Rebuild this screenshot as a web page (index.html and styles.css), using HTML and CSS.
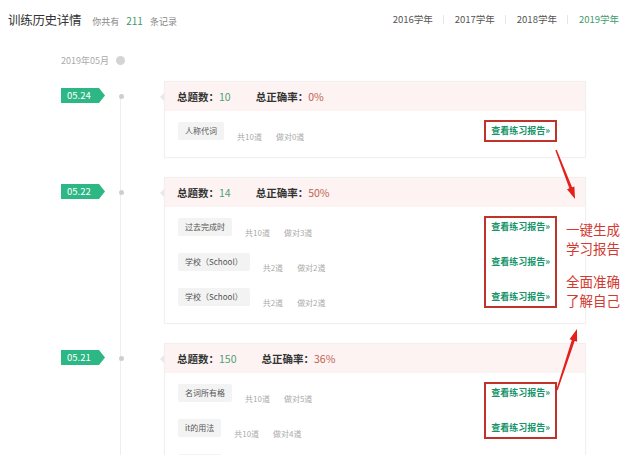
FILE: index.html
```html
<!DOCTYPE html>
<html lang="zh-CN">
<head>
<meta charset="utf-8">
<title>训练历史详情</title>
<link rel="stylesheet" href="styles.css">
</head>
<body>
<div class="page">
  <header class="top">
    <div class="title-group">
      <h1 class="title">训练历史详情</h1>
      <span class="meta">你共有<b class="total">211</b>条记录</span>
    </div>
    <nav class="years">
      <a class="year">2016学年</a>
      <a class="year">2017学年</a>
      <a class="year">2018学年</a>
      <a class="year active">2019学年</a>
    </nav>
  </header>

  <section class="timeline">
    <div class="month">
      <span class="month-label">2019年05月</span>
      <span class="month-dot"></span>
    </div>

    <div class="entry">
      <div class="date"><span class="badge">05.24</span></div>
      <div class="node"><span class="dot"></span></div>
      <div class="card">
        <div class="card-head">
          <span class="stat">总题数：<em class="num">10</em></span>
          <span class="stat">总正确率：<em class="rate">0%</em></span>
        </div>
        <div class="card-body">
          <div class="rows">
            <div class="row"><span class="tag">人称代词</span><span class="count">共10道</span><span class="count">做对0道</span></div>
          </div>
          <div class="links">
            <a class="link">查看练习报告»</a>
          </div>
        </div>
      </div>
    </div>

    <div class="entry">
      <div class="date"><span class="badge">05.22</span></div>
      <div class="node"><span class="dot"></span></div>
      <div class="card">
        <div class="card-head">
          <span class="stat">总题数：<em class="num">14</em></span>
          <span class="stat">总正确率：<em class="rate">50%</em></span>
        </div>
        <div class="card-body">
          <div class="rows">
            <div class="row"><span class="tag">过去完成时</span><span class="count">共10道</span><span class="count">做对3道</span></div>
            <div class="row"><span class="tag">学校（School）</span><span class="count">共2道</span><span class="count">做对2道</span></div>
            <div class="row"><span class="tag">学校（School）</span><span class="count">共2道</span><span class="count">做对2道</span></div>
          </div>
          <div class="links">
            <a class="link">查看练习报告»</a>
            <a class="link">查看练习报告»</a>
            <a class="link">查看练习报告»</a>
          </div>
        </div>
      </div>
    </div>

    <div class="entry">
      <div class="date"><span class="badge">05.21</span></div>
      <div class="node"><span class="dot"></span></div>
      <div class="card">
        <div class="card-head">
          <span class="stat">总题数：<em class="num">150</em></span>
          <span class="stat">总正确率：<em class="rate">36%</em></span>
        </div>
        <div class="card-body">
          <div class="rows">
            <div class="row"><span class="tag">名词所有格</span><span class="count">共10道</span><span class="count">做对5道</span></div>
            <div class="row"><span class="tag">it的用法</span><span class="count">共10道</span><span class="count">做对4道</span></div>
            <div class="row"><span class="tag tag-empty"></span></div>
          </div>
          <div class="links">
            <a class="link">查看练习报告»</a>
            <a class="link">查看练习报告»</a>
          </div>
        </div>
      </div>
    </div>
  </section>

  <div class="note">
    <p class="note-line">一键生成</p>
    <p class="note-line">学习报告</p>
    <p class="note-line note-gap">全面准确</p>
    <p class="note-line">了解自己</p>
  </div>

  <svg class="arrows" width="640" height="455" viewBox="0 0 640 455" aria-hidden="true">
    <polygon fill="#e3211c" points="556.7,149.7 572.1,187.3 574.4,186.4 575,199 567.0,189.2 569.3,188.3 555.3,150.3"/>
    <polygon fill="#e3211c" points="557.7,390.2 574.7,340.9 577.1,341.7 577,329 569.5,339.2 571.8,339.9 556.3,389.8"/>
  </svg>
</div>
</body>
</html>
```

FILE: styles.css
```css
* { box-sizing: border-box; }

html, body {
  margin: 0;
  padding: 0;
  background: #fff;
}

body {
  font-family: "Noto Sans CJK SC", "Noto Sans", "Liberation Sans", sans-serif;
  color: #333;
}

.page {
  position: relative;
  width: 640px;
  height: 455px;
  overflow: hidden;
}

/* header */
.top {
  height: 42px;
  display: flex;
  align-items: center;
  justify-content: space-between;
  padding: 0 21px 4px 8px;
}

.title-group {
  display: flex;
  align-items: baseline;
  gap: 11px;
}

.title {
  margin: 0;
  font-size: 12.5px;
  font-weight: normal;
  color: #333;
  letter-spacing: -0.3px;
}

.meta {
  font-size: 9px;
  color: #888;
}

.total {
  font-weight: normal;
  color: #3a9a6a;
  font-size: 10px;
  margin: 0 7px;
}

.years {
  display: flex;
  align-items: center;
}

.year {
  font-size: 9.5px;
  line-height: 9px;
  color: #555;
  padding: 0 10.5px;
}

.year + .year {
  border-left: 1px solid #e6e6e6;
}

.year:last-child { padding-right: 0; }

.year.active { color: #3f9a6e; }

/* timeline */
.timeline {
  padding-top: 10px;
  background: linear-gradient(#eeeeee, #eeeeee) no-repeat 120px 52px / 1px 100%;
}

.month {
  height: 16px;
  display: flex;
  align-items: center;
  padding-left: 61px;
  gap: 6px;
}

.month-label {
  font-size: 9px;
  color: #aaa;
  width: 49px;
}

.month-dot {
  width: 9px;
  height: 9px;
  border-radius: 50%;
  background: #d4d4d4;
}

.entry {
  display: grid;
  grid-template-columns: 106px 58px 422px;
  align-items: start;
  margin-top: 19px;
}

.month + .entry { margin-top: 13px; }

.date {
  display: flex;
  justify-content: flex-end;
  padding-top: 7px;
}

.badge {
  width: 44px;
  height: 15px;
  margin-right: 1px;
  background: #2cb784;
  color: #fff;
  font-size: 9.5px;
  line-height: 15px;
  padding-left: 6px;
  clip-path: polygon(0 0, calc(100% - 6px) 0, 100% 50%, calc(100% - 6px) 100%, 0 100%);
}

.node {
  padding: 13px 0 0 13px;
}

.dot {
  display: block;
  width: 5px;
  height: 5px;
  border-radius: 50%;
  background: #cfcfcf;
}

/* card */
.card {
  border: 1px solid #f1efef;
  background: #fff;
  box-shadow: 0 0 2px rgba(0, 0, 0, 0.03);
}

.card-head {
  position: relative;
  height: 29px;
  display: flex;
  align-items: center;
  gap: 25px;
  padding-left: 12px;
  background: #fdf3f2;
}

.card-head::before {
  content: "";
  position: absolute;
  left: -5px;
  top: 50%;
  margin-top: -4px;
  border-style: solid;
  border-width: 4px 4px 4px 0;
  border-color: transparent #e9e7e7 transparent transparent;
}

.stat {
  font-size: 10.5px;
  font-weight: bold;
  color: #333;
}

.num, .rate {
  font-style: normal;
  font-weight: normal;
  font-size: 10.5px;
}

.num { color: #4e9f76; }
.rate { color: #c0604f; }

.card-body {
  display: flex;
  align-items: flex-start;
  justify-content: space-between;
  padding: 11px 28px 15px 13px;
}

.rows {
  display: flex;
  flex-direction: column;
  gap: 17px;
}

.row {
  display: flex;
  align-items: center;
  height: 18px;
}

.tag {
  height: 18px;
  line-height: 18px;
  padding: 0 7px;
  font-size: 8px;
  color: #555;
  background: #f3f3f3;
  border-radius: 2px;
}

.tag-empty { width: 44px; }

.count {
  font-size: 8px;
  color: #aaa;
  margin-left: 13px;
  padding-top: 10px;
}

.count + .count { margin-left: 14px; }

.links {
  display: flex;
  flex-direction: column;
  gap: 17px;
  margin-top: -2px;
  border: 2px solid #c0332b;
  padding: 0 5px;
}

.link {
  height: 18px;
  line-height: 18px;
  font-size: 9px;
  font-weight: bold;
  color: #17956a;
}

/* annotations */
.note {
  position: absolute;
  left: 566px;
  top: 220px;
  color: #d23a31;
  font-size: 13.5px;
  line-height: 19px;
}

.note-line { margin: 0; }

.note-gap { margin-top: 14px; }

.arrows {
  position: absolute;
  left: 0;
  top: 0;
  pointer-events: none;
}
```
